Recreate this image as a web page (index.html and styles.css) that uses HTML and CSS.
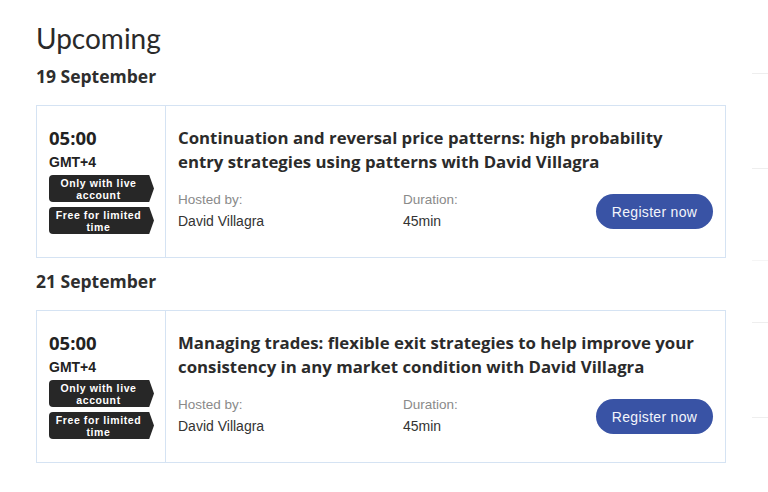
FILE: index.html
```html
<!DOCTYPE html>
<html>
<head>
<meta charset="utf-8">
<link rel="stylesheet" href="styles.css">
</head>
<body>
<div class="page">
  <h1 class="heading">Upcoming</h1>

  <h2 class="date">19 September</h2>
  <div class="card">
    <div class="when">
      <div class="time">05:00</div>
      <div class="tz">GMT+4</div>
      <div class="badge">Only with live account</div>
      <div class="badge">Free for limited time</div>
    </div>
    <div class="info">
      <div class="title">Continuation and reversal price patterns: high probability entry strategies using patterns with David Villagra</div>
      <div class="meta">
        <div class="field host">
          <div class="label">Hosted by:</div>
          <div class="value">David Villagra</div>
        </div>
        <div class="field dur">
          <div class="label">Duration:</div>
          <div class="value">45min</div>
        </div>
        <button class="register">Register now</button>
      </div>
    </div>
  </div>

  <h2 class="date">21 September</h2>
  <div class="card">
    <div class="when">
      <div class="time">05:00</div>
      <div class="tz">GMT+4</div>
      <div class="badge">Only with live account</div>
      <div class="badge">Free for limited time</div>
    </div>
    <div class="info">
      <div class="title">Managing trades: flexible exit strategies to help improve your consistency in any market condition with David Villagra</div>
      <div class="meta">
        <div class="field host">
          <div class="label">Hosted by:</div>
          <div class="value">David Villagra</div>
        </div>
        <div class="field dur">
          <div class="label">Duration:</div>
          <div class="value">45min</div>
        </div>
        <button class="register">Register now</button>
      </div>
    </div>
  </div>
</div>
<div class="edge">
  <span class="rule r1"></span>
  <span class="rule r2"></span>
  <span class="rule r3"></span>
  <span class="rule r4"></span>
  <span class="rule r5"></span>
</div>
</body>
</html>
```

FILE: styles.css
```css
html, body {
  margin: 0;
  padding: 0;
  background: #ffffff;
}
body {
  width: 768px;
  height: 492px;
  overflow: hidden;
  position: relative;
  font-family: "Lato", "Noto Sans", sans-serif;
  color: #2b2b2b;
}
.page {
  padding: 20px 0 0 36px;
  width: 690px;
}
.heading {
  margin: 0;
  font-weight: 400;
  font-size: 28px;
  line-height: 36px;
  color: #2a2a2a;
}
.date {
  margin: 8px 0 0 0;
  font-family: "Open Sans", sans-serif;
  font-size: 17.5px;
  line-height: 24px;
  font-weight: 700;
  color: #2e2e2e;
}
.date + .card { margin-top: 17px; }
.card + .date { margin-top: 11px; }
.card {
  display: flex;
  border: 1px solid #d5e3f3;
  box-sizing: border-box;
  height: 153px;
}
.when {
  width: 129px;
  border-right: 1px solid #d5e3f3;
  padding: 21px 0 0 12px;
  box-sizing: border-box;
}
.time {
  font-family: "Open Sans", sans-serif;
  font-size: 18.5px;
  font-weight: 700;
  line-height: 22px;
  color: #222;
}
.tz {
  font-family: "Liberation Sans", Arial, sans-serif;
  font-size: 14px;
  font-weight: 700;
  line-height: 16px;
  margin-top: 5px;
  color: #222;
}
.badge {
  position: relative;
  width: 99px;
  height: 27px;
  margin-top: 5px;
  background: #272727;
  color: #ffffff;
  border-radius: 4px 0 0 4px;
  font-family: "Liberation Sans", Arial, sans-serif;
  font-size: 10.5px;
  font-weight: 700;
  letter-spacing: 0.6px;
  line-height: 12px;
  text-align: center;
  display: flex;
  align-items: center;
  justify-content: center;
  box-sizing: border-box;
  padding: 0 2px;
}
.tz + .badge { margin-top: 5px; }
.badge::after {
  content: "";
  position: absolute;
  right: -6px;
  top: 0;
  width: 6px;
  height: 27px;
  background: #272727;
  clip-path: polygon(0 0, 20% 0, 100% 50%, 20% 100%, 0 100%);
}
.info {
  flex: 1;
  padding: 20px 12px 0 12px;
}
.title {
  font-family: "Open Sans", sans-serif;
  font-size: 16.8px;
  font-weight: 700;
  line-height: 24px;
  color: #2b2b2b;
  width: 530px;
}
.meta {
  display: flex;
  align-items: flex-start;
  margin-top: 18px;
}
.field {
  font-family: "Liberation Sans", Arial, sans-serif;
}
.host { width: 225px; }
.dur { width: 193px; }
.label {
  font-size: 13.5px;
  line-height: 16px;
  color: #8a8a8a;
}
.value {
  font-size: 14px;
  line-height: 18px;
  color: #333;
  margin-top: 4px;
}
.register {
  margin-top: 2px;
  width: 117px;
  height: 35px;
  border: none;
  border-radius: 18px;
  background: #3953a5;
  color: #f3f5fb;
  font-family: "Liberation Sans", Arial, sans-serif;
  font-size: 14px;
  letter-spacing: 0.3px;
  padding: 0;
}
.edge {
  position: absolute;
  right: 0;
  top: 0;
  width: 16px;
  height: 492px;
}
.rule {
  position: absolute;
  left: 0;
  width: 16px;
  height: 1px;
  background: #eeeeee;
}
.r1 { top: 73px; }
.r2 { top: 168px; }
.r3 { top: 260px; background: #f5f5f5; }
.r4 { top: 322px; }
.r5 { top: 417px; }
```
